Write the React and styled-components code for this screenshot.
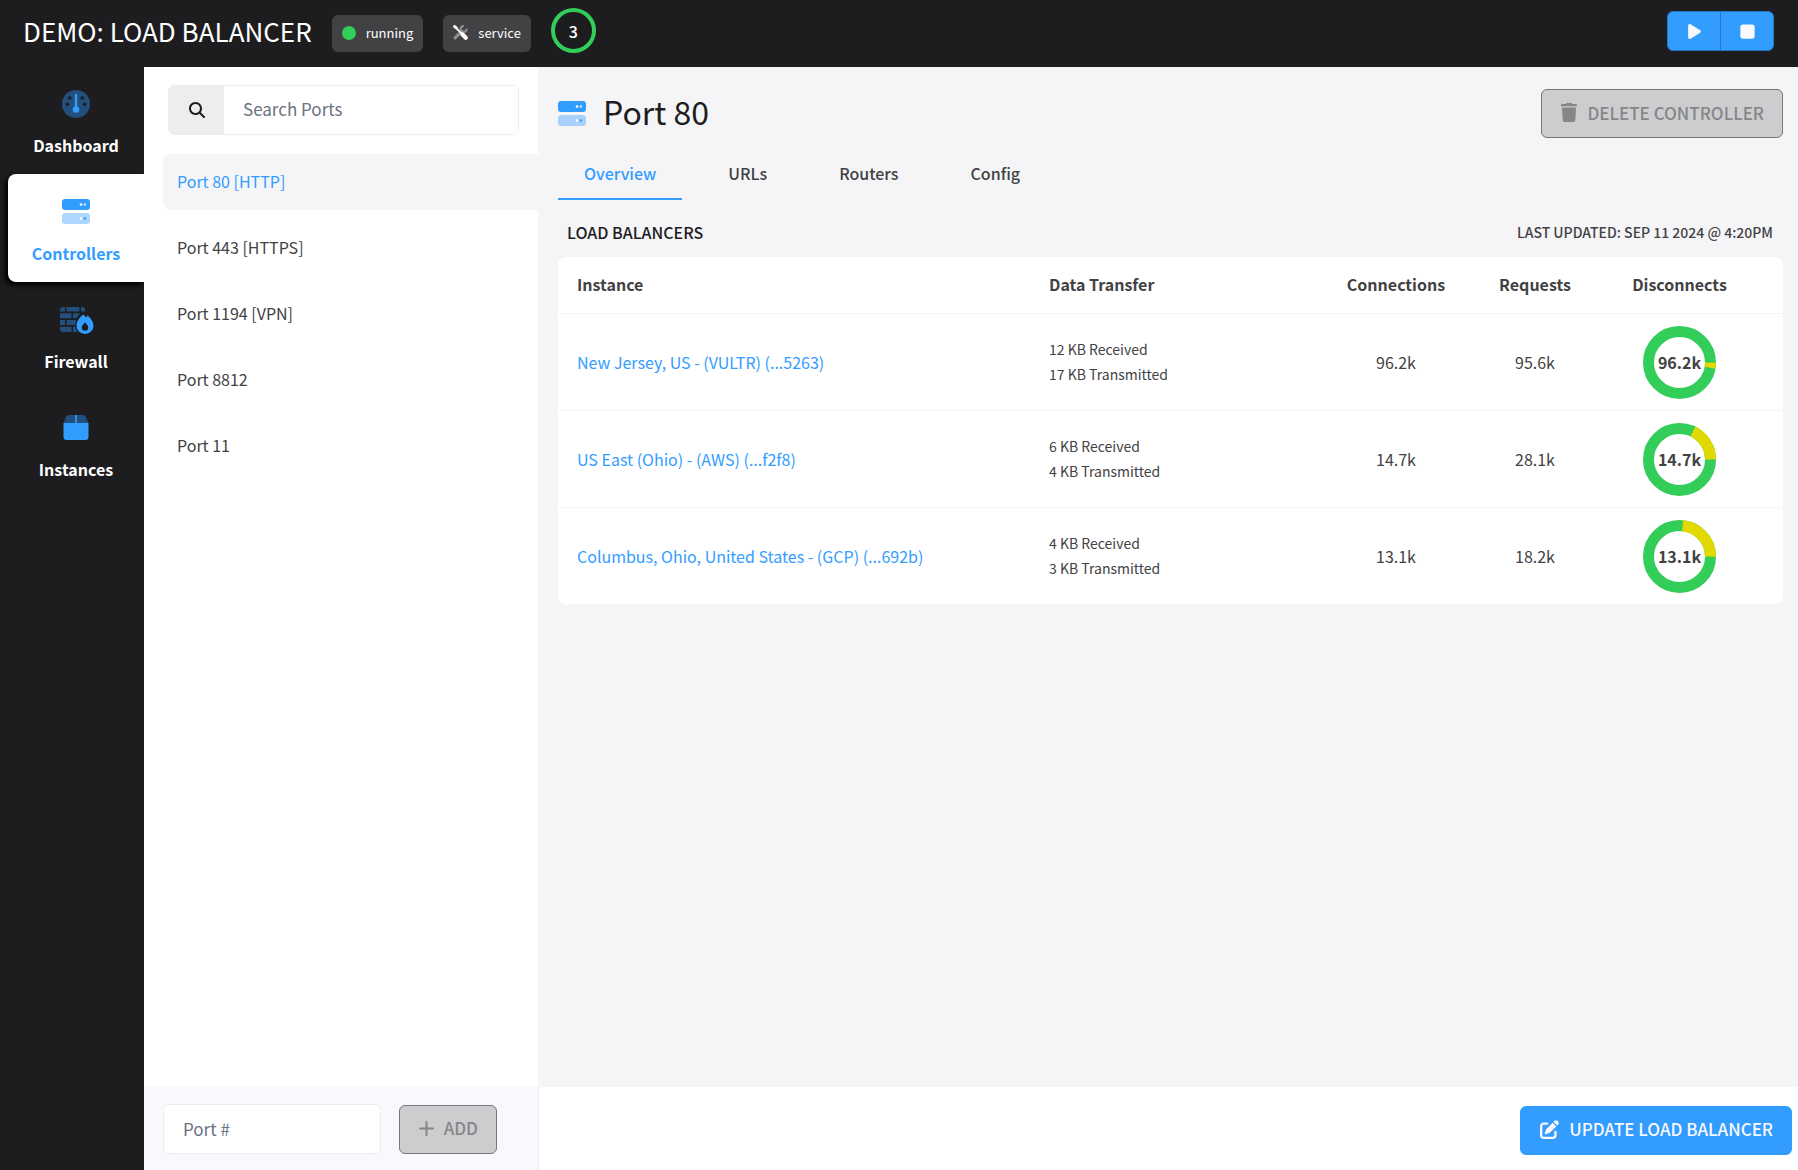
import React from "react";
import styled, { createGlobalStyle } from "styled-components";
import { FaPlay, FaStop, FaPenToSquare, FaMagnifyingGlass } from "react-icons/fa6";

const blue = "#339cff";
const ink = "#1d1d1f";
const text = "#424244";
const green = "#33cd5a";
const yellow = "#e2d900";
const font = `"Noto Sans CJK JP", "Noto Sans CJK SC", "Noto Sans", sans-serif`;

const Global = createGlobalStyle`
  * { box-sizing: border-box; }
  body { margin: 0; background: ${ink}; color: ${text}; font: 16px/24px ${font}; }
  button, input { font: inherit; }
  h1, h2, h3, p, ul { margin: 0; padding: 0; font-weight: 400; }
  a { color: inherit; text-decoration: none; }
  svg { display: block; flex: none; }
`;

const Page = styled.div`
  min-height: 100vh;
  display: grid;
  grid-template: auto 1fr / 144px minmax(0, 1fr);
`;
const Header = styled.header`
  grid-column: 1 / -1;
  height: 67px;
  padding: 0 24px 0 23px;
  display: flex;
  align-items: center;
  color: #fff;
`;
const Title = styled.h1`
  font-size: 26px;
  line-height: 36px;
  padding-bottom: 6px;
`;
const Badge = styled.span`
  height: 37px;
  margin-left: 20px;
  padding: 0 10px 2px;
  display: flex;
  align-items: center;
  gap: 10px;
  border-radius: 6px;
  background: #424244;
  font-size: 13px;
`;
const Dot = styled.span`
  width: 14px;
  height: 14px;
  border-radius: 50%;
  background: ${green};
`;
const Count = styled.span`
  width: 45px;
  height: 45px;
  margin: 0 auto 6px 20px;
  display: grid;
  place-items: center;
  border: 4px solid ${green};
  border-radius: 50%;
  font-weight: 500;
`;
const Controls = styled.div`
  display: flex;
  margin-bottom: 5px;
`;
const ControlButton = styled.button`
  width: 54px;
  height: 40px;
  display: grid;
  place-items: center;
  border: 1px solid #2477c6;
  border-radius: ${(p) => (p.$end ? "0 6px 6px 0" : "6px 0 0 6px")};
  margin-left: ${(p) => (p.$end ? "-1px" : 0)};
  background: ${blue};
  color: #f8f8fd;
`;

const Nav = styled.nav`
  margin-top: -1px;
  padding-left: 8px;
`;
const NavItem = styled.a`
  height: 108px;
  padding-top: 24px;
  display: flex;
  flex-direction: column;
  align-items: center;
  gap: 15px;
  border-radius: 8px 0 0 8px;
  font-weight: 700;
  color: ${(p) => (p.$active ? blue : "#fff")};
  background: ${(p) => (p.$active ? "#fff" : "transparent")};
  box-shadow: ${(p) => (p.$active ? "-3px 3px 5px #000" : "none")};
`;

const Content = styled.div`
  display: grid;
  grid-template-columns: 394px minmax(0, 1fr);
`;
const Side = styled.aside`
  display: flex;
  flex-direction: column;
  background: #fff;
`;
const Search = styled.label`
  height: 50px;
  margin: 18px 19px 19px 24px;
  display: flex;
  border: 1px solid #ededf0;
  border-radius: 6px;
  overflow: hidden;
`;
const SearchIcon = styled.span`
  width: 55px;
  display: grid;
  place-items: center;
  background: #ededef;
  color: ${ink};
`;
const Field = styled.input`
  flex: 1;
  min-width: 0;
  padding: 0 19px 2px;
  border: 0;
  outline: 0;
  background: #fff;
  color: ${text};
  font-size: 17px;
  &::placeholder { color: #6b7280; opacity: 1; }
`;
const Ports = styled.ul`
  flex: 1;
  padding-left: 19px;
  display: flex;
  flex-direction: column;
  gap: 10px;
  list-style: none;
`;
const Port = styled.a`
  height: 56px;
  padding: 0 14px 3px;
  display: flex;
  align-items: center;
  border-radius: 8px 0 0 8px;
  color: ${(p) => (p.$active ? blue : text)};
  background: ${(p) => (p.$active ? "#f5f5f7" : "transparent")};
`;
const AddBar = styled.form`
  height: 84px;
  padding: 2px 41px 0 19px;
  display: flex;
  align-items: center;
  gap: 18px;
  background: #f8f8fd;
`;
const PortField = styled(Field)`
  height: 50px;
  border: 1px solid #ededf0;
  border-radius: 6px;
`;
const Button = styled.button`
  height: 49px;
  padding: 0 18px 2px 19px;
  display: flex;
  align-items: center;
  gap: 10px;
  border: 1px solid ${(p) => (p.$primary ? blue : "#77777a")};
  border-radius: 6px;
  background: ${(p) => (p.$primary ? blue : "#cdcdcf")};
  color: ${(p) => (p.$primary ? "#f8f8fd" : "#868688")};
  font-size: 17px;
  font-weight: 500;
`;

const Main = styled.main`
  display: flex;
  flex-direction: column;
  background: #f5f5f7;
`;
const Body = styled.div`
  flex: 1;
  padding: 22px 15px 0 20px;
`;
const Heading = styled.div`
  display: flex;
  align-items: center;
  gap: 17px;
`;
const PortTitle = styled.h2`
  margin-right: auto;
  padding-bottom: 5px;
  font-size: 32px;
  line-height: 44px;
  color: ${ink};
`;
const Tabs = styled.div`
  margin-top: 12px;
  display: flex;
  gap: 20px;
`;
const Tab = styled.button`
  height: 50px;
  padding: 0 26px 2px;
  border: 0;
  border-bottom: 2px solid ${(p) => (p.$active ? blue : "transparent")};
  background: none;
  color: ${(p) => (p.$active ? blue : text)};
  font-weight: 500;
`;
const Caption = styled.div`
  padding: 20px 10px 13px 9px;
  display: flex;
  align-items: center;
  justify-content: space-between;
`;
const CaptionTitle = styled.h3`
  font-size: 16px;
  font-weight: 500;
  color: ${ink};
`;
const Updated = styled.p`
  font-size: 14px;
  font-weight: 500;
`;
const Table = styled.table`
  width: 100%;
  table-layout: fixed;
  border-spacing: 0;
  border-radius: 8px;
  background: #fff;
`;
const Col = styled.col`
  width: ${(p) => p.$width}px;
`;
const Th = styled.th`
  height: 56px;
  padding: ${(p) => (p.$center ? "0 0 2px" : "0 19px 2px")};
  text-align: ${(p) => (p.$center ? "center" : "left")};
  font-weight: 700;
`;
const Td = styled.td`
  height: 97px;
  padding: ${(p) => (p.$center ? 0 : "0 19px")};
  border-top: 1px solid #f5f5f7;
  text-align: ${(p) => (p.$center ? "center" : "left")};
`;
const InstanceLink = styled.a`
  color: ${blue};
`;
const Transfer = styled.p`
  font-size: 14px;
  line-height: 25px;
`;
const Ring = styled.div`
  display: grid;
  place-items: center;
  font-weight: 700;
  & > * { grid-area: 1 / 1; }
`;
const Footer = styled.footer`
  height: 83px;
  padding: 3px 6px 0;
  display: flex;
  align-items: center;
  justify-content: flex-end;
  border-left: 1px solid #ededf0;
  background: #fff;
`;

const ServerIcon = () => (
  <svg width="28" height="28" viewBox="0 0 28 28">
    <rect y="1" width="28" height="11" rx="3" fill={blue} />
    <rect y="15" width="28" height="11" rx="3" fill={blue} opacity="0.4" />
    <circle cx="19" cy="6.5" r="1.3" fill="#fff" />
    <circle cx="22.8" cy="6.5" r="1.3" fill="#fff" opacity="0.7" />
    <circle cx="19" cy="20.5" r="1.3" fill="#fff" />
    <circle cx="22.8" cy="20.5" r="1.3" fill={blue} />
  </svg>
);
const GaugeIcon = () => (
  <svg width="28" height="28" viewBox="0 0 28 28">
    <circle cx="14" cy="14" r="14" fill="#224f7c" />
    <g fill={ink}>
      <circle cx="7.8" cy="8" r="1.8" />
      <circle cx="20.2" cy="8" r="1.8" />
      <circle cx="5.3" cy="14.3" r="1.8" />
      <circle cx="22.7" cy="14.3" r="1.8" />
    </g>
    <path d="M14 5v14" stroke={blue} strokeWidth="2.4" strokeLinecap="round" />
    <circle cx="14" cy="19.5" r="3.3" fill={blue} />
  </svg>
);
const FirewallIcon = () => (
  <svg width="36" height="28" viewBox="-2 0 36 28">
    <g fill="#224f7c">
      <path d="M3 1h2v4.500H0V4a3 3 0 0 1 3-3zM6.500 1h13v4.500h-13zM21 1h1a3 3 0 0 1 3 3v1.500h-4z" />
      <path d="M0 7.200h11.500v5H0zM13 7.200h7l-3.500 5H13zM0 14h5v5H0zM6.500 14h9.500l-.8 5H6.500zM0 20.800h11.500V26H3a3 3 0 0 1-3-3zM13 20.800h2.500l1.700 5.200H13z" />
    </g>
    <path
      d="M23 8.500c1.500 1.200 2.300 2 3 3 .6-.8 1-1.300 1.700-2 3 2.500 5.800 6.500 5.800 10a8.500 8.500 0 0 1-17 0c0-3.800 3-8 6.500-11zm2 7.800c-1.800 2-3.200 3.500-3.200 5.300a3.200 3.200 0 0 0 6.400 0c0-1.800-1.400-3.300-3.200-5.300z"
      fill={blue}
      fillRule="evenodd"
    />
  </svg>
);
const BoxIcon = () => (
  <svg width="26" height="28" viewBox="0 0 26 28">
    <path d="M5.500 1H20a3 3 0 0 1 2.800 1.800L25.500 9H.5l2.500-6.200A3 3 0 0 1 5.500 1z" fill="#224f7c" />
    <path d="M12.200 1h1.600v8h-1.600z" fill={blue} />
    <path d="M.5 9h25v14a3 3 0 0 1-3 3h-19a3 3 0 0 1-3-3z" fill={blue} />
  </svg>
);
const ToolsIcon = () => (
  <svg width="15" height="15" viewBox="0 0 16 16" fill="none" strokeLinecap="round">
    <path d="M2.200 13.800L9.500 6.500" stroke="#8f8f91" strokeWidth="3.400" />
    <path d="M14.300 4a3.200 3.200 0 1 1-2.700-2.700" stroke="#8f8f91" strokeWidth="2.400" strokeLinecap="butt" />
    <path d="M1.600 1.600l2 1.400" stroke="#fff" strokeWidth="3" />
    <path d="M3 3l6 6" stroke="#fff" strokeWidth="2" />
    <path d="M10.200 10.200l3.400 3.400" stroke="#fff" strokeWidth="4.400" />
  </svg>
);
const TrashIcon = () => (
  <svg width="16" height="20" viewBox="0 0 16 20" fill="currentColor">
    <path d="M5.600 0h4.800l.8 1H15a1 1 0 0 1 1 1v1.200H0V2a1 1 0 0 1 1-1h3.800zM1 4.600h14l-.7 12.600a2 2 0 0 1-2 1.800H3.700a2 2 0 0 1-2-1.800z" />
  </svg>
);
const PlusIcon = () => (
  <svg width="15" height="15" viewBox="0 0 15 15" stroke="currentColor" strokeWidth="2" strokeLinecap="round">
    <path d="M7.500 1v13M1 7.500h13" />
  </svg>
);

const Donut = ({ share, clockwise }) => {
  const length = 2 * Math.PI * 31;
  return (
    <svg width="73" height="73" viewBox="0 0 73 73" fill="none" strokeWidth="11">
      <circle cx="36.5" cy="36.5" r="31" stroke={green} />
      <circle
        cx="36.5"
        cy="36.5"
        r="31"
        stroke={yellow}
        strokeDasharray={`${share * length} ${length}`}
        transform={clockwise ? undefined : `rotate(${-360 * share} 36.5 36.5)`}
      />
    </svg>
  );
};

const navItems = [
  ["Dashboard", GaugeIcon],
  ["Controllers", ServerIcon],
  ["Firewall", FirewallIcon],
  ["Instances", BoxIcon],
];
const ports = ["Port 80 [HTTP]", "Port 443 [HTTPS]", "Port 1194 [VPN]", "Port 8812", "Port 11"];
const tabs = ["Overview", "URLs", "Routers", "Config"];
const rows = [
  { name: "New Jersey, US - (VULTR) (...5263)", rx: "12 KB", tx: "17 KB", connections: "96.2k", requests: "95.6k", share: 0.027, clockwise: true },
  { name: "US East (Ohio) - (AWS) (...f2f8)", rx: "6 KB", tx: "4 KB", connections: "14.7k", requests: "28.1k", share: 0.179 },
  { name: "Columbus, Ohio, United States - (GCP) (...692b)", rx: "4 KB", tx: "3 KB", connections: "13.1k", requests: "18.2k", share: 0.234 },
];

export default function App() {
  return (
    <>
      <Global />
      <Page>
        <Header>
          <Title>DEMO: LOAD BALANCER</Title>
          <Badge><Dot />running</Badge>
          <Badge><ToolsIcon />service</Badge>
          <Count>3</Count>
          <Controls>
            <ControlButton type="button" aria-label="Start"><FaPlay size={17} /></ControlButton>
            <ControlButton type="button" aria-label="Stop" $end><FaStop size={19} /></ControlButton>
          </Controls>
        </Header>
        <Nav>
          {navItems.map(([label, Icon]) => (
            <NavItem key={label} href="#" $active={label === "Controllers"}>
              <Icon />
              {label}
            </NavItem>
          ))}
        </Nav>
        <Content>
          <Side>
            <Search>
              <SearchIcon><FaMagnifyingGlass size={16} /></SearchIcon>
              <Field type="search" placeholder="Search Ports" aria-label="Search Ports" />
            </Search>
            <Ports>
              {ports.map((port, i) => (
                <li key={port}><Port href="#" $active={i === 0}>{port}</Port></li>
              ))}
            </Ports>
            <AddBar>
              <PortField placeholder="Port #" aria-label="Port number" />
              <Button type="button" disabled><PlusIcon />ADD</Button>
            </AddBar>
          </Side>
          <Main>
            <Body>
              <Heading>
                <ServerIcon />
                <PortTitle>Port 80</PortTitle>
                <Button type="button" disabled><TrashIcon />DELETE CONTROLLER</Button>
              </Heading>
              <Tabs role="tablist">
                {tabs.map((tab, i) => (
                  <Tab key={tab} type="button" role="tab" aria-selected={i === 0} $active={i === 0}>{tab}</Tab>
                ))}
              </Tabs>
              <Caption>
                <CaptionTitle>LOAD BALANCERS</CaptionTitle>
                <Updated>LAST UPDATED: SEP 11 2024 @ 4:20PM</Updated>
              </Caption>
              <Table>
                <colgroup>
                  <Col />
                  <Col $width={268} />
                  <Col $width={196} />
                  <Col $width={82} />
                  <Col $width={207} />
                </colgroup>
                <thead>
                  <tr>
                    <Th>Instance</Th>
                    <Th>Data Transfer</Th>
                    <Th $center>Connections</Th>
                    <Th $center>Requests</Th>
                    <Th $center>Disconnects</Th>
                  </tr>
                </thead>
                <tbody>
                  {rows.map((row) => (
                    <tr key={row.name}>
                      <Td><InstanceLink href="#">{row.name}</InstanceLink></Td>
                      <Td>
                        <Transfer>{row.rx} Received</Transfer>
                        <Transfer>{row.tx} Transmitted</Transfer>
                      </Td>
                      <Td $center>{row.connections}</Td>
                      <Td $center>{row.requests}</Td>
                      <Td $center>
                        <Ring>
                          <Donut share={row.share} clockwise={row.clockwise} />
                          <span>{row.connections}</span>
                        </Ring>
                      </Td>
                    </tr>
                  ))}
                </tbody>
              </Table>
            </Body>
            <Footer>
              <Button type="button" $primary><FaPenToSquare size={19} />UPDATE LOAD BALANCER</Button>
            </Footer>
          </Main>
        </Content>
      </Page>
    </>
  );
}
